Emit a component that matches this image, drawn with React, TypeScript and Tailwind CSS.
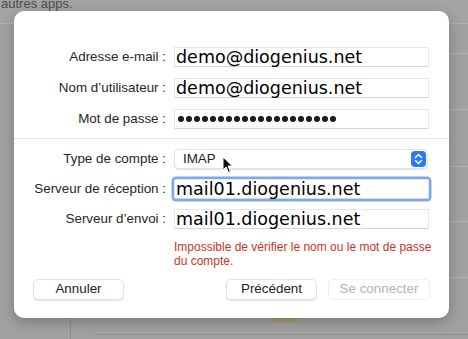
import React from 'react';

const labelCls = "w-[146px] shrink-0 text-right text-[13.4px] text-[#262626] leading-[20px] pr-[1px]";
const valueFont = { fontFamily: '"DejaVu Sans", sans-serif' };

const Field: React.FC<{ label: string; value?: string; focused?: boolean; password?: boolean }> = ({ label, value, focused, password }) => (
  <div className="flex items-center gap-[7px]">
    <div className={labelCls}>{label}</div>
    <div
      className={
        "w-[255px] h-[20px] bg-white border border-[#e8e8e8] border-b-[#d6d6d6] overflow-visible " +
        (focused ? "rounded-[2px] shadow-[0_0_0_2.5px_#7ea8ec]" : "")
      }
    >
      {password ? (
        <div className="h-full pl-[3px] flex items-center gap-[2px]" aria-label="mot de passe">
          {Array.from({ length: 20 }).map((_, i) => (
            <span key={i} className="w-[6px] h-[6px] rounded-full bg-[#1a1a1a]" />
          ))}
        </div>
      ) : (
        <div className="pl-[1px] text-[17.5px] leading-[19px] text-black whitespace-nowrap" style={valueFont}>
          {value}
        </div>
      )}
    </div>
  </div>
);

const Stepper = () => (
  <div className="w-[15px] h-[16px] rounded-[4px] bg-[#2a7af4] flex items-center justify-center">
    <svg width="9" height="12" viewBox="0 0 9 12" fill="none" stroke="white" strokeWidth="1.5" strokeLinecap="round" strokeLinejoin="round">
      <path d="M1.5 4.5 L4.5 1.5 L7.5 4.5" />
      <path d="M1.5 7.5 L4.5 10.5 L7.5 7.5" />
    </svg>
  </div>
);

const Button: React.FC<{ children: React.ReactNode; w: string; disabled?: boolean }> = ({ children, w, disabled }) => (
  <div
    className={
      w +
      " h-[21px] rounded-[5px] flex items-center justify-center text-[13.4px] " +
      (disabled
        ? "bg-white border border-[#efefef] text-[#b4b4b4]"
        : "bg-white border border-[#e2e2e2] shadow-[0_1px_1px_rgba(0,0,0,0.12)] text-[#222]")
    }
  >
    {children}
  </div>
);

export default function App() {
  return (
    <div
      className="relative w-[468px] h-[339px] overflow-hidden bg-[#a1a1a1]"
      style={{ fontFamily: '"Liberation Sans", Arial, sans-serif' }}
    >
      {/* background app */}
      <div className="h-[27px] border-b border-[#b0b0b0] bg-[#a4a4a4]">
        <div className="-mt-[3px] pl-[1px] text-[13px] leading-[14px] text-[#4d4d4d]">autres apps.</div>
      </div>
      <div className="flex flex-col ml-[450px]">
        <div className="h-[30px] border-b border-[#b4b4b4]" />
        <div className="h-[56px] border-b border-[#b4b4b4]" />
        <div className="h-[57px] border-b border-[#b4b4b4]" />
        <div className="h-[55px] border-b border-[#b4b4b4]" />
        <div className="h-[56px] border-b border-[#b4b4b4]" />
      </div>
      <div className="absolute left-[70px] top-[305px] w-px h-[34px] bg-[#8f8f8f]" />
      <div className="absolute left-[95px] top-[334px] w-[373px] h-px bg-[#8f8f8f]" />
      <div className="absolute left-[274px] top-[316px] w-[23px] h-[6px] bg-[#a89b6e]" />

      {/* dialog */}
      <div className="absolute left-[14px] top-[11px] w-[435px] h-[307px] rounded-[10px] bg-white shadow-[0_4px_14px_rgba(0,0,0,0.25)]">
        <div className="pt-[36px] pl-[7px] flex flex-col gap-[11px]">
          <Field label="Adresse e-mail :" value="demo@diogenius.net" />
          <Field label="Nom d’utilisateur :" value="demo@diogenius.net" />
          <Field label="Mot de passe :" password />
        </div>
        <div className="mt-[9px] h-px bg-[#e3e3e3]" />
        <div className="pt-[10px] pl-[7px] flex flex-col gap-[10px]">
          <div className="flex items-center gap-[7px]">
            <div className={labelCls}>Type de compte :</div>
            <div className="w-[254px] h-[20px] rounded-[5px] bg-white border border-[#e4e4e4] shadow-[0_1px_1px_rgba(0,0,0,0.12)] flex items-center justify-between pl-[8px] pr-[1px]">
              <span className="text-[13.4px] text-[#222]">IMAP</span>
              <Stepper />
            </div>
          </div>
          <Field label="Serveur de réception :" value="mail01.diogenius.net" focused />
          <Field label="Serveur d’envoi :" value="mail01.diogenius.net" />
        </div>
        <div className="mt-[11px] ml-[160px] text-[12px] leading-[14px] text-[#c8341f]">
          Impossible de vérifier le nom ou le mot de passe
          <br />
          du compte.
        </div>
        <div className="mt-[11px] pl-[19px] pr-[19px] flex items-center">
          <Button w="w-[91px]">Annuler</Button>
          <div className="flex-1" />
          <Button w="w-[91px]">Précédent</Button>
          <div className="w-[11px]" />
          <Button w="w-[102px]" disabled>Se connecter</Button>
        </div>
      </div>

      {/* mouse cursor */}
      <svg className="absolute left-[222px] top-[156px]" width="12" height="18" viewBox="0 0 12 18">
        <path d="M1 1 L1 14 L4 11 L6.5 16.5 L8.5 15.5 L6 10 L10.5 10 Z" fill="#111" stroke="white" strokeWidth="1" strokeLinejoin="round" />
      </svg>
    </div>
  );
}
